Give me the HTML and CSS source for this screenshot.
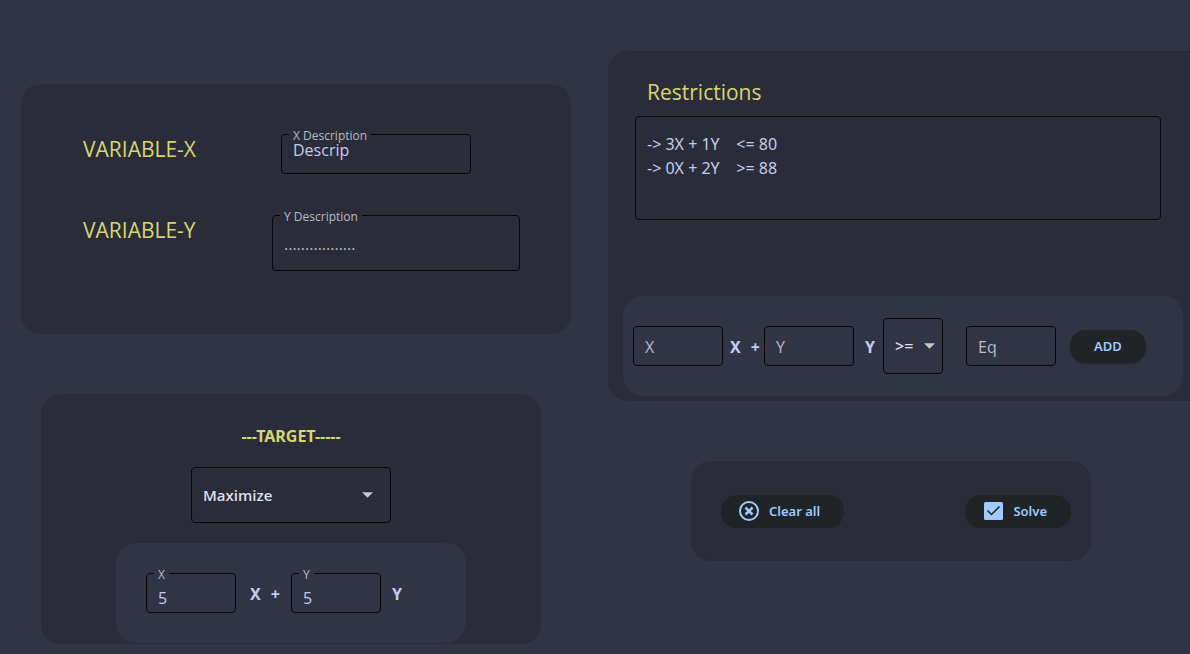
FILE: index.html
```html
<!DOCTYPE html>
<html lang="en">
<head>
<meta charset="utf-8">
<meta name="viewport" content="width=device-width, initial-scale=1">
<title>Linear programming</title>
<link rel="stylesheet" href="styles.css">
</head>
<body>
<main class="page">
  <div class="column column-left">
    <section class="card variables">
      <div class="variable-row">
        <h2 class="heading">VARIABLE-X</h2>
        <div class="field field-x">
          <label class="float-label" for="desc-x">X Description</label>
          <input class="input input-raised" id="desc-x" type="text" value="Descrip">
        </div>
      </div>
      <div class="variable-row">
        <h2 class="heading heading-y">VARIABLE-Y</h2>
        <div class="field field-y">
          <label class="float-label" for="desc-y">Y Description</label>
          <input class="input input-tall" id="desc-y" type="text" placeholder=".................">
        </div>
      </div>
    </section>

    <section class="card target">
      <h2 class="target-title">---TARGET-----</h2>
      <div class="select-box select-goal">
        <select class="select" aria-label="Target">
          <option>Maximize</option>
          <option>Minimize</option>
        </select>
        <svg class="arrow" viewBox="0 0 10 5" aria-hidden="true"><path d="M0 0h10L5 5z"/></svg>
      </div>
      <form class="panel panel-target">
        <div class="field field-small">
          <label class="float-label" for="target-x">X</label>
          <input class="input input-lowered" id="target-x" type="text" value="5">
        </div>
        <span class="term term-x"><b>X</b><b>+</b></span>
        <div class="field field-small">
          <label class="float-label" for="target-y">Y</label>
          <input class="input input-lowered" id="target-y" type="text" value="5">
        </div>
        <span class="term term-y"><b>Y</b></span>
      </form>
    </section>
  </div>

  <div class="column column-right">
    <section class="card restrictions">
      <h2 class="heading heading-list" id="restrictions-title">Restrictions</h2>
      <textarea class="list" aria-labelledby="restrictions-title" readonly>-> 3X + 1Y    &lt;= 80
-> 0X + 2Y    >= 88</textarea>
      <form class="panel panel-add">
        <div class="field field-small"><input class="input" type="text" placeholder="X" aria-label="X"></div>
        <span class="term add-x"><b>X</b><b>+</b></span>
        <div class="field field-small"><input class="input" type="text" placeholder="Y" aria-label="Y"></div>
        <span class="term add-y"><b>Y</b></span>
        <div class="select-box select-sign">
          <select class="select" aria-label="Sign">
            <option>&gt;=</option>
            <option>&lt;=</option>
            <option>=</option>
          </select>
          <svg class="arrow" viewBox="0 0 10 5" aria-hidden="true"><path d="M0 0h10L5 5z"/></svg>
        </div>
        <div class="field field-small field-eq"><input class="input" type="text" placeholder="Eq" aria-label="Eq"></div>
        <button class="button button-add" type="button">ADD</button>
      </form>
    </section>

    <section class="card actions">
      <button class="button" type="button">
        <svg class="icon" viewBox="0 0 22 22" aria-hidden="true">
          <circle class="stroke" cx="11" cy="11" r="9"/>
          <path class="stroke cross" d="M7.500 7.500l7 7M14.500 7.500l-7 7"/>
        </svg>
        Clear all
      </button>
      <button class="button" type="button">
        <svg class="icon" viewBox="0 0 22 22" aria-hidden="true">
          <rect class="fill" x="2" y="2" width="19" height="18" rx="1.500"/>
          <path class="tick" d="M5.500 10.500l4 4 8-8"/>
        </svg>
        Solve
      </button>
    </section>
  </div>
</main>
</body>
</html>
```
FILE: styles.css
```css
:root {
  --page: #313445;
  --card: #2b2c39;
  --yellow: #d8d66e;
  --text: #c3cbec;
  --muted: #b9bac8;
  --blue: #9ecaff;
  --button: #202427;
}

* {
  box-sizing: border-box;
}

body {
  margin: 0;
  background: var(--page);
  color: var(--text);
  font-family: "Noto Sans", "Open Sans", sans-serif;
  font-size: 16px;
  line-height: 24px;
  overflow-x: hidden;
}

.page {
  display: grid;
  grid-template-columns: 608fr 582fr;
  align-items: start;
  min-height: 100vh;
}

.column {
  display: flex;
  flex-direction: column;
  gap: 60px;
}

.column-left {
  padding-top: 84px;
}

.column-right {
  padding-top: 51px;
}

.card {
  background: var(--card);
  border-radius: 20px;
}

.heading {
  margin: 0;
  color: var(--yellow);
  font-family: "Open Sans", "Noto Sans", sans-serif;
  font-size: 21px;
  font-weight: 400;
  line-height: 30px;
}

.variables {
  display: flex;
  flex-direction: column;
  gap: 41px;
  min-height: 250px;
  margin: 0 37px 0 21px;
  padding: 50px 51px 63px 62px;
}

.variable-row {
  display: flex;
  align-items: flex-start;
}

.variable-row .heading {
  width: 198px;
}

.variable-row .heading-y {
  width: 189px;
}

.field {
  position: relative;
}

.field-x {
  width: 190px;
}

.field-y {
  flex: 1;
}

.field-small {
  width: 90px;
}

.float-label {
  position: absolute;
  top: -6px;
  left: 8px;
  padding: 0 4px;
  background: var(--card);
  color: var(--muted);
  font-family: "Open Sans", "Noto Sans", sans-serif;
  font-size: 12px;
  line-height: 16px;
}

.panel .float-label {
  background: var(--page);
}

.input,
.select,
.list {
  display: block;
  width: 100%;
  margin: 0;
  border: 1px solid #05060a;
  border-radius: 4px;
  background: transparent;
  color: var(--text);
  font: inherit;
  outline: 0;
}

.input {
  height: 40px;
  padding: 2px 11px 0;
  font-family: "Open Sans", "Noto Sans", sans-serif;
}

.input::placeholder {
  color: var(--muted);
  opacity: 1;
}

.input-raised {
  padding: 0 11px 8px;
}

.input-lowered {
  padding: 10px 11px 0;
}

.input-tall {
  height: 56px;
}

.target {
  display: flex;
  flex-direction: column;
  align-items: center;
  margin: 0 67px 0 41px;
  padding: 30px 20px 1px;
}

.target-title {
  margin: 0 0 19px;
  color: var(--yellow);
  font-size: 16px;
  font-weight: 700;
}

.select-box {
  position: relative;
}

.select-goal {
  width: 200px;
  margin-bottom: 20px;
}

.select {
  height: 56px;
  padding: 0 11px;
  appearance: none;
  color: #dedfe9;
  font-family: "Open Sans", "Noto Sans", sans-serif;
  font-size: 15px;
  font-weight: 600;
}

.arrow {
  position: absolute;
  top: 25px;
  right: 18px;
  width: 11px;
  height: 6px;
  fill: #c4c6cf;
  pointer-events: none;
}

.panel {
  display: flex;
  align-items: center;
  height: 100px;
  background: var(--page);
  border-radius: 20px;
}

.panel-target {
  width: 350px;
  padding: 0 30px;
}

.term {
  display: flex;
  gap: 10px;
  padding-top: 2px;
}

.term-x {
  width: 55px;
  padding-left: 14px;
}

.term-y {
  padding-left: 11px;
}

.restrictions {
  padding: 26px 7px 5px 15px;
  border-radius: 20px 0 0 20px;
}

.heading-list {
  margin: 0 0 9px 24px;
}

.list {
  width: auto;
  min-width: calc(100% - 34px);
  height: 104px;
  margin: 0 22px 76px 12px;
  padding: 15px 11px;
  resize: none;
}

.panel-add {
  padding: 0 10px;
}

.add-x {
  width: 41px;
  padding-left: 7px;
}

.add-y {
  width: 29px;
  padding-left: 11px;
}

.select-sign {
  width: 60px;
  margin-right: 23px;
}

.select-sign .select {
  font-size: 16px;
}

.select-sign .arrow {
  right: 8px;
}

.field-eq {
  margin-right: 14px;
}

.button {
  display: flex;
  align-items: center;
  gap: 9px;
  height: 33px;
  padding: 0 24px 0 17px;
  border: 0;
  border-radius: 16px;
  background: var(--button);
  color: var(--blue);
  font-family: "Noto Sans", "Open Sans", sans-serif;
  font-size: 13px;
  font-weight: 600;
}

.button-add {
  padding: 0 24px;
  box-shadow: 0 1px 2px #24262e;
}

.actions {
  display: flex;
  align-items: center;
  justify-content: space-between;
  height: 100px;
  margin: 0 99px 0 83px;
  padding: 0 20px 0 30px;
}

.icon {
  width: 22px;
  height: 22px;
}

.stroke {
  fill: none;
  stroke: var(--blue);
  stroke-width: 2;
}

.cross {
  stroke-width: 2.5;
}

.fill {
  fill: var(--blue);
}

.tick {
  fill: none;
  stroke: var(--button);
  stroke-width: 1.5;
}
```
